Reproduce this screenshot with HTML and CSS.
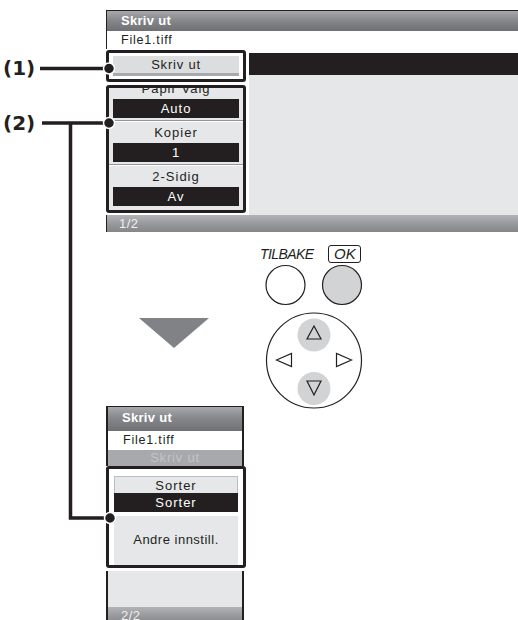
FILE: index.html
```html
<!DOCTYPE html>
<html lang="no">
<head>
    <meta name="viewport" content="width=device-width, initial-scale=1">
    <title>Skriv ut</title>
    <link rel="stylesheet" href="styles.css">
</head>
<body>
    <div class="figure">
        <!-- skjerm 1 -->
        <div class="screen screen-top">
            <div class="screen-title">Skriv ut</div>
            <div class="screen-file">File1.tiff</div>
            <div class="screen-body">
                <div class="menu-col">
                    <div class="callout-box box-one">
                        <div class="menu-btn">Skriv ut</div>
                    </div>
                    <div class="callout-box box-two">
                        <div class="menu-item item-cut">
                            <div class="item-label">Papir Valg</div>
                            <div class="item-value">Auto</div>
                        </div>
                        <div class="menu-item">
                            <div class="item-label">Kopier</div>
                            <div class="item-value">1</div>
                        </div>
                        <div class="menu-item last">
                            <div class="item-label">2-Sidig</div>
                            <div class="item-value">Av</div>
                        </div>
                    </div>
                </div>
                <div class="preview-col">
                    <div class="preview-bar"></div>
                    <div class="preview-area"></div>
                </div>
            </div>
            <div class="screen-footer">1/2</div>
        </div>

        <!-- pil ned -->
        <svg class="down-arrow" width="70" height="30" viewBox="0 0 70 30">
            <polygon points="0,0 70,0 35,30" fill="#808285"/>
        </svg>

        <!-- taster -->
        <div class="keypad">
            <div class="key-labels">
                <span class="key-back">TILBAKE</span>
                <span class="key-ok">OK</span>
            </div>
            <svg class="key-svg" width="100" height="150" viewBox="0 0 100 150">
                <circle cx="21.5" cy="21" r="19.5" fill="#fff" stroke="#231f20" stroke-width="1.2"/>
                <circle cx="78" cy="21" r="19.5" fill="#d1d3d4" stroke="#231f20" stroke-width="1.2"/>
                <circle cx="50" cy="96.5" r="47.5" fill="#fff" stroke="#231f20" stroke-width="1.2"/>
                <circle cx="50" cy="71" r="16.5" fill="#d1d3d4"/>
                <circle cx="50" cy="124.5" r="16.5" fill="#d1d3d4"/>
                <polygon points="50,62 57,75 43,75" fill="none" stroke="#231f20" stroke-width="1.2"/>
                <polygon points="43,117 57,117 50,131" fill="none" stroke="#231f20" stroke-width="1.2"/>
                <polygon points="12.5,96 27.5,89.5 27.5,102.5" fill="none" stroke="#231f20" stroke-width="1.2"/>
                <polygon points="87.5,96 72.5,89.5 72.5,102.5" fill="none" stroke="#231f20" stroke-width="1.2"/>
            </svg>
        </div>

        <!-- skjerm 2 -->
        <div class="screen screen-bottom">
            <div class="screen-title">Skriv ut</div>
            <div class="screen-file">File1.tiff</div>
            <div class="screen-faded">Skriv ut</div>
            <div class="callout-box box-three">
                <div class="sort-label">Sorter</div>
                <div class="sort-value">Sorter</div>
                <div class="sort-more">Andre innstill.</div>
            </div>
            <div class="screen-empty"></div>
            <div class="screen-footer">2/2</div>
        </div>

        <!-- callouts -->
        <div class="callout-num num-one">(1)</div>
        <div class="callout-num num-two">(2)</div>
        <svg class="callout-lines" width="518" height="620" viewBox="0 0 518 620">
            <path d="M40 68.5 H108" stroke="#231f20" stroke-width="3.5" fill="none"/>
            <path d="M42 123 H108 M70.5 123 V518 H108" stroke="#231f20" stroke-width="3.5" fill="none"/>
            <circle cx="109" cy="68.5" r="5.5" fill="#231f20" stroke="#fff" stroke-width="1.5"/>
            <circle cx="109" cy="123" r="5.5" fill="#231f20" stroke="#fff" stroke-width="1.5"/>
            <circle cx="110" cy="518" r="5.5" fill="#231f20" stroke="#fff" stroke-width="1.5"/>
        </svg>
    </div>
</body>
</html>
```

FILE: styles.css
```css
body {
    margin: 0;
    background: #fff;
    font-family: 'Liberation Sans', Arial, sans-serif;
    color: #231f20;
}

.figure {
    position: relative;
    width: 518px;
    height: 620px;
    overflow: hidden;
}

/* skjermene */
.screen {
    position: absolute;
    left: 106px;
    display: flex;
    flex-direction: column;
}

.screen-top {
    top: 10px;
    width: 412px;
}

.screen-bottom {
    top: 406px;
    width: 140px;
}

.screen-title {
    box-sizing: border-box;
    height: 21px;
    padding-left: 14px;
    border-top: 1px solid #231f20;
    border-left: 1px solid #231f20;
    background: linear-gradient(#a7a9ac, #86888b 45%, #6f7073);
    color: #fff;
    font-weight: bold;
    font-size: 13px;
    letter-spacing: 0.3px;
    line-height: 19px;
}

.screen-file {
    box-sizing: border-box;
    height: 18px;
    padding-left: 14px;
    border-left: 1px solid #231f20;
    background: #fff;
    font-size: 12.5px;
    letter-spacing: 0.8px;
    line-height: 18px;
}

.screen-body {
    display: flex;
    gap: 3px;
    height: 166px;
}

.menu-col {
    display: flex;
    flex-direction: column;
    gap: 3px;
    width: 140px;
    padding-top: 1px;
}

.callout-box {
    box-sizing: border-box;
    border: 3px solid #231f20;
    border-radius: 3px;
    background: #fff;
    overflow: hidden;
}

.box-one {
    height: 32px;
    padding: 3px 4px;
}

.menu-btn {
    height: 17px;
    border-bottom: 3px solid #a7a9ac;
    background: #dcddde;
    text-align: center;
    font-size: 13px;
    letter-spacing: 0.8px;
    line-height: 18px;
}

.box-two {
    height: 128px;
    background: #e6e7e8;
}

.menu-item {
    padding-bottom: 2px;
    border-bottom: 1px solid #939598;
    box-shadow: 0 1px 0 #fff;
    margin-bottom: 1px;
}

.menu-item.last {
    border-bottom: none;
    box-shadow: none;
}

.item-cut {
    margin-top: -10px;
}

.item-label {
    height: 20px;
    text-align: center;
    font-size: 13px;
    letter-spacing: 1px;
    line-height: 21px;
}

.item-value {
    height: 19px;
    margin: 1px 4px 0;
    background: #231f20;
    color: #fff;
    text-align: center;
    font-size: 13px;
    letter-spacing: 1px;
    line-height: 19px;
}

.preview-col {
    flex: 1;
    display: flex;
    flex-direction: column;
    padding-top: 4px;
}

.preview-bar {
    height: 22px;
    background: #231f20;
}

.preview-area {
    flex: 1;
    background: #e6e7e8;
}

.screen-footer {
    box-sizing: border-box;
    height: 17px;
    padding-left: 12px;
    border-left: 1px solid #231f20;
    background: linear-gradient(#b1b3b6, #939598 60%, #85878a);
    color: #eeeff0;
    font-size: 13px;
    letter-spacing: 0.5px;
    line-height: 18px;
}

/* skjerm 2 */
.screen-bottom .screen-title {
    height: 25px;
    line-height: 22px;
    width: 138px;
    border-right: 2px solid #231f20;
    border-left-width: 2px;
}

.screen-bottom .screen-file {
    height: 19px;
    width: 138px;
    padding-left: 15px;
    border-left-width: 2px;
    border-right: 2px solid #231f20;
    line-height: 19px;
}

.screen-faded {
    box-sizing: border-box;
    height: 16px;
    width: 138px;
    border-left: 2px solid #231f20;
    border-right: 2px solid #231f20;
    background: #a7a9ac;
    color: #c3c4c6;
    text-align: center;
    font-size: 13px;
    letter-spacing: 0.8px;
    line-height: 16px;
    overflow: hidden;
}

.box-three {
    display: flex;
    flex-direction: column;
    height: 102px;
    padding: 7px 5px 0;
}

.sort-label {
    box-sizing: border-box;
    height: 17px;
    border: 1px solid #bcbec0;
    border-bottom: none;
    background: #e6e7e8;
    text-align: center;
    font-size: 13px;
    letter-spacing: 1px;
    line-height: 17px;
}

.sort-value {
    height: 19px;
    background: #231f20;
    color: #fff;
    text-align: center;
    font-size: 13px;
    letter-spacing: 1px;
    line-height: 19px;
}

.sort-more {
    flex: 1;
    margin-top: 4px;
    background: #e6e7e8;
    text-align: center;
    font-size: 13px;
    letter-spacing: 0.5px;
    line-height: 48px;
}

.screen-empty {
    box-sizing: border-box;
    height: 36px;
    width: 138px;
    margin-top: 3px;
    border-left: 2px solid #231f20;
    border-right: 2px solid #231f20;
    background: #e6e7e8;
}

.screen-bottom .screen-footer {
    width: 138px;
    border-left-width: 2px;
    border-right: 2px solid #231f20;
    padding-left: 13px;
}

/* pil */
.down-arrow {
    position: absolute;
    left: 139px;
    top: 318px;
}

/* taster */
.keypad {
    position: absolute;
    left: 260px;
    top: 245px;
    display: flex;
    flex-direction: column;
}

.key-labels {
    display: flex;
    align-items: center;
    gap: 15px;
    height: 18px;
    font-style: italic;
    font-size: 14px;
}

.key-back {
    letter-spacing: -0.6px;
}

.key-ok {
    box-sizing: border-box;
    width: 33px;
    height: 18px;
    border: 1px solid #231f20;
    border-radius: 3px;
    text-align: center;
    font-size: 15px;
    line-height: 16px;
}

.key-svg {
    display: block;
    margin: 1px 0 0 4px;
}

/* callouts */
.callout-num {
    position: absolute;
    left: 3px;
    font-family: 'DejaVu Sans', sans-serif;
    font-weight: bold;
    font-size: 20px;
    line-height: 22px;
}

.num-one {
    top: 57px;
}

.num-two {
    top: 112px;
}

.callout-lines {
    position: absolute;
    left: 0;
    top: 0;
    pointer-events: none;
}
```
